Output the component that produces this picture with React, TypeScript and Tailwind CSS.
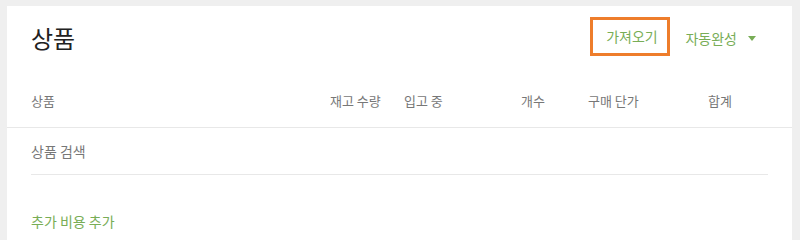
export default function App() {
  const font = { fontFamily: '"Noto Sans CJK KR", "Noto Sans", sans-serif' };
  return (
    <div className="h-[240px] w-[800px] overflow-hidden bg-[#efefef] pl-[7px] pr-[8px] pt-[6px]" style={font}>
      <div className="h-full bg-white">
        <div className="flex h-[64px] items-center pl-[24px] pr-[36px]">
          <h1 className="flex-1 text-[24px] leading-none text-[#212121]">상품</h1>
          <button className="mb-[3px] flex h-[39px] w-[80px] items-center justify-center border-[3px] border-[#ee7d2b] pl-[3px] text-[14px] text-[#78ad56]">
            가져오기
          </button>
          <button className="ml-[15px] flex items-center text-[14px] text-[#78ad56]">
            자동완성
            <svg className="ml-[11px]" width="8" height="5" viewBox="0 0 8 5">
              <path d="M0 0h8L4 5z" fill="#78ad56" />
            </svg>
          </button>
        </div>
        <div className="flex h-[57px] items-center pl-[24px] pt-[4px] text-[13px] text-[#777]">
          <span className="w-[299px]">상품</span>
          <span className="w-[74px]">재고 수량</span>
          <span className="w-[117px]">입고 중</span>
          <span className="w-[67px]">개수</span>
          <span className="w-[120px]">구매 단가</span>
          <span>합계</span>
        </div>
        <div className="border-t border-[#e8e8e8] px-[24px]">
          <div className="flex h-[47px] items-center border-b border-[#e8e8e8] text-[14px] text-[#777]">상품 검색</div>
          <div className="flex h-[90px] items-start pt-[36px] text-[14px] text-[#78ad56]">추가 비용 추가</div>
        </div>
      </div>
    </div>
  );
}
